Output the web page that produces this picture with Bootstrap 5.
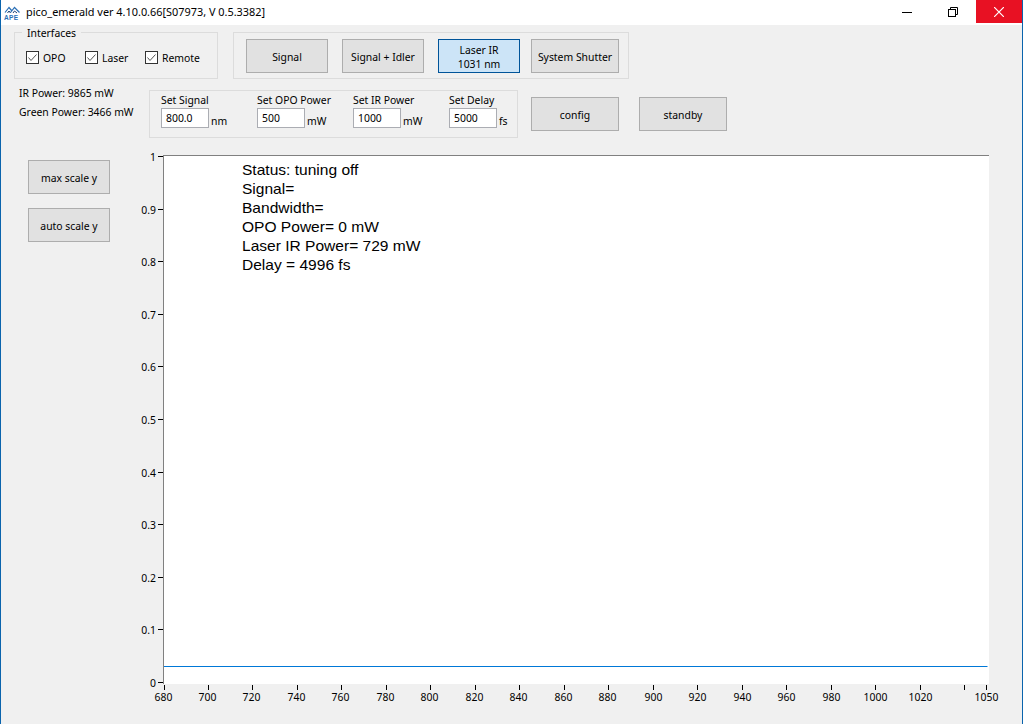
<!DOCTYPE html>
<html><head><meta charset="utf-8">
<link href="https://cdn.jsdelivr.net/npm/bootstrap@5.3.0/dist/css/bootstrap.min.css" rel="stylesheet">
<style>
html,body{margin:0;height:724px;overflow:hidden;background:#f0f0f0}
body{font-family:"Noto Sans","Liberation Sans",sans-serif;font-size:10.4px;line-height:13px;color:#000}
.appwin{width:1023px;height:724px;border-left:1px solid #0a64ad;border-right:1px solid #0a64ad;position:relative;background:#f0f0f0}
.titlebar{height:25px;background:#fff;padding-left:3px}
.titletxt{font-size:10.9px;margin-left:4px;margin-top:5px}
.logo{margin-top:3px}
.logo text{font-family:"Liberation Sans",sans-serif;font-size:6.5px;font-weight:700;fill:#2a6fb5;letter-spacing:.4px}
.ctl{width:46px;height:23px}
.ctl-x{background:#e81123}
.topzone{padding:7px 0 0 13px;height:114px}
.framed{border:1px solid #dcdcdc}
.ifaces{width:204px;height:47px;position:relative;padding:18px 0 0 11px}
.legend-t{position:absolute;left:7px;top:-7px;background:#f0f0f0;padding:0 5px;line-height:14px}
.chk{gap:4px;line-height:15px}
.chk svg{display:block}
.chk1{width:59px}
.chk2{width:60px}
.btnsbox{width:396px;height:47px;margin-left:15px;padding:6px 0 0 12px;gap:14px}
.wbtn{background:#e1e1e1;border:1px solid #adadad;width:82px;height:34px;padding:2px 0 0;font-size:10.4px;line-height:13px;color:#000;border-radius:0}
.wbtn:hover{background:#e1e1e1;color:#000;border-color:#adadad}
.wbtn-on,.wbtn-on:hover{background:#cce4f7;border-color:#005499;padding-top:1px;line-height:14px}
.wide{width:88px}
.ml-n{margin-left:-3px}
.row2{margin-top:11px}
.powers{width:135px;padding:0 0 0 5px;gap:6px;margin-top:-3px}
.setbox{width:369px;height:48px;padding:3px 0 0 11px;gap:16px}
.setf{width:80px;flex-shrink:0;white-space:nowrap}
.setlbl{line-height:13px;height:13px;margin-bottom:1px}
.inp{width:48px;height:20px;background:#fff;border:1px solid #abadb3;padding:0 0 0 4px;line-height:18px;margin-right:2px;border-radius:0;color:#000}
.unit{position:relative;top:3px}
.rowbtns{margin:7px 0 0 13px;gap:20px}
.sideb{gap:14px;padding:21px 0 0 27px;width:110px}
.chartsvg{position:absolute;left:0;top:0;width:1021px;height:724px}
.chartsvg text{font-family:"Noto Sans","Liberation Sans",sans-serif;font-size:10.4px;fill:#000}
.statusbox{position:absolute;left:241px;top:160px;font-family:"Liberation Sans",Arial,sans-serif;font-size:15.55px;line-height:19px;white-space:nowrap}
</style></head><body>
<div class="appwin">
<svg class="chartsvg" viewBox="0 0 1021 724" id="ch"></svg>
<div class="titlebar d-flex align-items-start position-relative">
  <svg class="logo flex-shrink-0" width="18" height="18" viewBox="0 0 18 18"><path d="M1 9.500L5 4.500L8 8M6.500 9.500L10.500 4.500L15.500 9.500" fill="none" stroke="#2a6fb5" stroke-width="1.200"/><path d="M3.500 10L5 8L6.500 10M9 10L10.500 8L13 10" fill="none" stroke="#1b3f73" stroke-width="1"/><text x="0" y="17">APE</text></svg>
  <div class="titletxt">pico_emerald ver 4.10.0.66[S07973, V 0.5.3382]</div>
  <div class="ms-auto d-flex">
    <div class="ctl d-flex align-items-center justify-content-center"><svg width="10" height="10"><rect x="0" y="5" width="10" height="1"/></svg></div>
    <div class="ctl d-flex align-items-center justify-content-center"><svg width="10" height="10" fill="none" stroke="#000"><rect x=".5" y="2.500" width="7" height="7"/><path d="M2.500 2.500V.5h7v7H7.500"/></svg></div>
    <div class="ctl ctl-x d-flex align-items-center justify-content-center"><svg width="10" height="10" stroke="#fff" stroke-width="1.200"><path d="M0 0L10 10M10 0L0 10"/></svg></div>
  </div>
</div>
<div class="topzone position-relative">
  <div class="d-flex">
    <div class="framed ifaces d-flex align-items-start">
      <div class="legend-t">Interfaces</div>
      <div class="chk chk1 d-flex align-items-start"><svg width="13" height="13"><rect x=".5" y=".5" width="12" height="12" fill="#fff" stroke="#333"/><path d="M2.500 6.500L5 9.500L10.500 3.500" fill="none" stroke="#555"/></svg>OPO</div>
      <div class="chk chk2 d-flex align-items-start"><svg width="13" height="13"><rect x=".5" y=".5" width="12" height="12" fill="#fff" stroke="#333"/><path d="M2.500 6.500L5 9.500L10.500 3.500" fill="none" stroke="#555"/></svg>Laser</div>
      <div class="chk d-flex align-items-start"><svg width="13" height="13"><rect x=".5" y=".5" width="12" height="12" fill="#fff" stroke="#333"/><path d="M2.500 6.500L5 9.500L10.500 3.500" fill="none" stroke="#555"/></svg>Remote</div>
    </div>
    <div class="framed btnsbox d-flex">
      <button class="btn wbtn">Signal</button>
      <button class="btn wbtn">Signal + Idler</button>
      <button class="btn wbtn wbtn-on">Laser IR<br>1031 nm</button>
      <button class="btn wbtn wide ml-n">System Shutter</button>
    </div>
  </div>
  <div class="d-flex row2">
    <div class="powers d-flex flex-column">
      <div>IR Power: 9865 mW</div>
      <div>Green Power: 3466 mW</div>
    </div>
    <div class="framed setbox d-flex">
      <div class="setf"><div class="setlbl">Set Signal</div><span class="inp d-inline-block">800.0</span><span class="unit">nm</span></div>
      <div class="setf"><div class="setlbl">Set OPO Power</div><span class="inp d-inline-block">500</span><span class="unit">mW</span></div>
      <div class="setf"><div class="setlbl">Set IR Power</div><span class="inp d-inline-block">1000</span><span class="unit">mW</span></div>
      <div class="setf"><div class="setlbl">Set Delay</div><span class="inp d-inline-block">5000</span><span class="unit">fs</span></div>
    </div>
    <div class="rowbtns d-flex align-items-start">
      <button class="btn wbtn wide">config</button>
      <button class="btn wbtn wide">standby</button>
    </div>
  </div>
</div>
<div class="sideb d-flex flex-column">
  <button class="btn wbtn">max scale y</button>
  <button class="btn wbtn">auto scale y</button>
</div>
<div class="statusbox">Status: tuning off<br>Signal=<br>Bandwidth=<br>OPO Power= 0 mW<br>Laser IR Power= 729 mW<br>Delay = 4996 fs</div>
</div>
<script>
let s='<rect x="162" y="155" width="826" height="529" fill="#fff"/><rect x="162" y="155" width="826" height="1" fill="#808080"/><rect x="162" y="155" width="1" height="529" fill="#808080"/><rect x="163" y="666" width="823.500" height="1" fill="#0078d7"/>';
for(let i=0;i<=10;i++){const y=Math.round(682-52.6*i)+.5;const l=i==0?'0':i==10?'1':(i/10).toFixed(1);
s+=`<path d="M157 ${y}H162" stroke="#000"/><text x="155" y="${y+4}" text-anchor="end">${l}</text>`;}
const xs=[];for(let v=680;v<=1040;v+=20)xs.push(v);xs.push(1050);
xs.forEach(v=>{const x=Math.round(162.5+(v-680)*2.2243)+.5;s+=`<path d="M${x} 685V690" stroke="#000"/>`;if(v!=1040)s+=`<text x="${v<900?x-1:x}" y="701" text-anchor="middle">${v}</text>`;});
document.getElementById('ch').innerHTML=s;
</script>
<script src="https://cdn.jsdelivr.net/npm/bootstrap@5.3.0/dist/js/bootstrap.bundle.min.js"></script>
</body></html>
